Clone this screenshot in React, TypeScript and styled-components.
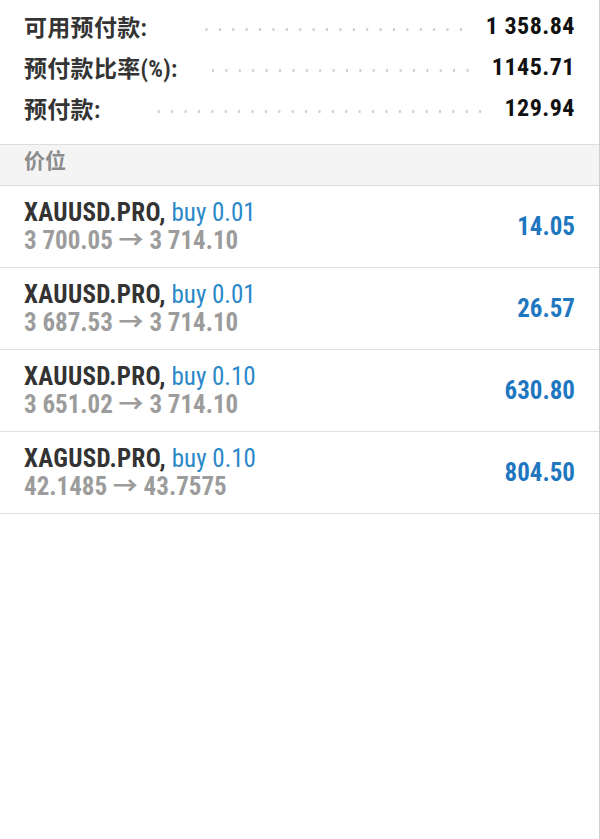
import React from 'react';
import styled, { createGlobalStyle } from 'styled-components';

const GlobalStyle = createGlobalStyle`
  * { box-sizing: border-box; }
  body {
    margin: 0;
    background: #fff;
    font-family: "Roboto Condensed", Roboto, "Noto Sans CJK SC", sans-serif;
  }
`;

const Page = styled.div`
  min-height: 839px;
  width: 600px;
  background: #fff;
  border-right: 1px solid #cfcfcf;
`;

const Summary = styled.div`
  padding: 5px 24px 16px;
  border-bottom: 1px solid #dcdcdc;
`;

const SummaryRow = styled.div`
  display: flex;
  align-items: center;
  height: 41px;
`;

const Label = styled.span`
  font-family: "Roboto Condensed", "Noto Sans CJK SC", sans-serif;
  font-size: 23px;
  font-weight: 700;
  color: #343434;
  letter-spacing: 0.3px;
`;

const Dots = styled.span<{ $left: number }>`
  flex: 1;
  height: 3px;
  margin: 7px 18px 0 ${({ $left }) => $left}px;
  background-image: radial-gradient(circle, #d0d0d0 1.1px, transparent 1.5px);
  background-size: 13.4px 3px;
  background-position: right center;
`;

const Value = styled.span`
  font-size: 24px;
  font-weight: 700;
  color: #111;
  letter-spacing: 0.5px;
`;

const SectionHeader = styled.div`
  height: 41px;
  padding: 3px 24px 10px;
  display: flex;
  align-items: center;
  background: #f4f4f4;
  border-bottom: 1px solid #dcdcdc;
  font-family: "Roboto Condensed", "Noto Sans CJK SC", sans-serif;
  font-size: 21px;
  font-weight: 700;
  color: #8c8c8c;
  line-height: 1;
`;

const TradeRow = styled.div`
  display: flex;
  align-items: center;
  justify-content: space-between;
  height: 82px;
  padding: 0 24px;
  border-bottom: 1px solid #e0e0e0;
`;

const TradeInfo = styled.div`
  display: flex;
  flex-direction: column;
`;

const TradeLine = styled.div`
  height: 28px;
  line-height: 28px;
  font-size: 25px;
  white-space: nowrap;
`;

const Symbol = styled.span`
  font-weight: 700;
  color: #333;
  letter-spacing: 0.3px;
`;

const Side = styled.span`
  font-weight: 400;
  color: #2a88c8;
`;

const Prices = styled(TradeLine)`
  font-weight: 700;
  color: #9c9c9c;
`;

const Profit = styled.span`
  font-size: 25px;
  font-weight: 700;
  color: #1f77c0;
`;

const summary = [
  { label: '可用预付款:', value: '1 358.84', left: 48 },
  { label: '预付款比率(%):', value: '1145.71', left: 34 },
  { label: '预付款:', value: '129.94', left: 46 },
];

const trades = [
  { symbol: 'XAUUSD.PRO,', side: 'buy 0.01', open: '3 700.05', current: '3 714.10', profit: '14.05' },
  { symbol: 'XAUUSD.PRO,', side: 'buy 0.01', open: '3 687.53', current: '3 714.10', profit: '26.57' },
  { symbol: 'XAUUSD.PRO,', side: 'buy 0.10', open: '3 651.02', current: '3 714.10', profit: '630.80' },
  { symbol: 'XAGUSD.PRO,', side: 'buy 0.10', open: '42.1485', current: '43.7575', profit: '804.50' },
];

export default function App() {
  return (
    <>
      <GlobalStyle />
      <Page>
        <Summary>
          {summary.map((s) => (
            <SummaryRow key={s.label}>
              <Label>{s.label}</Label>
              <Dots $left={s.left} />
              <Value>{s.value}</Value>
            </SummaryRow>
          ))}
        </Summary>
        <SectionHeader>价位</SectionHeader>
        {trades.map((t, i) => (
          <TradeRow key={i}>
            <TradeInfo>
              <TradeLine>
                <Symbol>{t.symbol}</Symbol> <Side>{t.side}</Side>
              </TradeLine>
              <Prices>
                {t.open} → {t.current}
              </Prices>
            </TradeInfo>
            <Profit>{t.profit}</Profit>
          </TradeRow>
        ))}
      </Page>
    </>
  );
}
